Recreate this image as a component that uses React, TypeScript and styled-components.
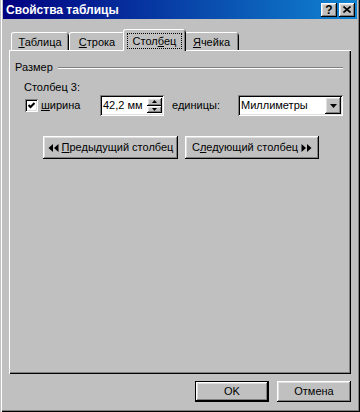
import React from "react";
import styled, { createGlobalStyle, css } from "styled-components";

const GlobalStyle = createGlobalStyle`
  html, body { margin: 0; padding: 0; background: #c0c0c0; }
  body { font-family: "Liberation Sans", Arial, sans-serif; font-size: 11px; color: #000; }
  * { box-sizing: border-box; }
`;

const raised = css`
  box-shadow: inset -1px -1px 0 #000, inset 1px 1px 0 #fff, inset -2px -2px 0 #808080, inset 2px 2px 0 #dfdfdf;
`;
const sunken = css`
  box-shadow: inset 1px 1px 0 #808080, inset -1px -1px 0 #fff, inset 2px 2px 0 #000, inset -2px -2px 0 #dfdfdf;
`;

const Window = styled.div`
  width: 360px;
  height: 412px;
  background: #c0c0c0;
  padding: 0 3px 3px 3px;
  display: flex;
  flex-direction: column;
  overflow: hidden;
  box-shadow: inset 1px 0 0 #c0c0c0, inset 2px 0 0 #fff, inset -1px -1px 0 #000, inset -2px -2px 0 #808080;
`;

const TitleBar = styled.div`
  height: 19px;
  flex: none;
  display: flex;
  align-items: center;
  padding: 0 2px 0 3px;
  background: linear-gradient(to right, #000080, #1084d0);
`;

const TitleText = styled.div`
  color: #fff;
  font-weight: bold;
  font-size: 12px;
  line-height: 14px;
  flex: 1;
  white-space: nowrap;
`;

const CaptionButtons = styled.div`
  display: flex;
  gap: 2px;
  margin-top: 1px;
`;

const CaptionButton = styled.div`
  width: 16px;
  height: 14px;
  background: #c0c0c0;
  ${raised};
  display: flex;
  align-items: center;
  justify-content: center;
  font-weight: bold;
  font-size: 12px;
  line-height: 12px;
  padding-bottom: 1px;
`;

const TabStrip = styled.div`
  margin-top: 10px;
  height: 21px;
  flex: none;
  display: flex;
  align-items: flex-end;
  padding-left: 8px;
  position: relative;
  z-index: 1;
`;

const Tab = styled.div<{ $w: number; $active?: boolean }>`
  width: ${(p) => (p.$active ? p.$w + 4 : p.$w)}px;
  height: ${(p) => (p.$active ? 22 : 18)}px;
  margin: ${(p) => (p.$active ? "0 -2px -1px -2px" : "0")};
  padding: ${(p) => (p.$active ? "4px 4px 2px 4px" : "2px 0 0 0")};
  background: #c0c0c0;
  border-radius: 3px 3px 0 0;
  box-shadow: inset 1px 0 0 #fff, inset 0 1px 0 #fff, inset -1px 0 0 #000, inset -2px 0 0 #808080;
  display: flex;
  position: relative;
  z-index: ${(p) => (p.$active ? 2 : 1)};
`;

const TabLabel = styled.div<{ $focus?: boolean }>`
  flex: 1;
  display: flex;
  align-items: center;
  justify-content: center;
  line-height: 13px;
  white-space: nowrap;
  border: 1px dotted ${(p) => (p.$focus ? "#000" : "transparent")};
`;

const Key = styled.span`
  text-decoration: underline;
`;

const Panel = styled.div`
  margin: 0 6px;
  height: 324px;
  flex: none;
  background: #c0c0c0;
  border-top: 1px solid #fff;
  border-left: 1px solid #fff;
  box-shadow: inset -1px -1px 0 #000, inset -2px -2px 0 #808080;
  padding: 10px 8px 0 5px;
  display: flex;
  flex-direction: column;
  position: relative;
  z-index: 0;
`;

const GroupHeader = styled.div`
  height: 13px;
  display: flex;
  align-items: center;
  line-height: 13px;
`;

const GroupLine = styled.div`
  flex: 1;
  height: 2px;
  margin-left: 5px;
  margin-top: 1px;
  border-top: 1px solid #808080;
  border-bottom: 1px solid #fff;
`;

const ColumnLabel = styled.div`
  margin-top: 7px;
  padding-left: 9px;
  line-height: 13px;
  height: 13px;
`;

const FieldRow = styled.div`
  margin-top: 1px;
  height: 21px;
  display: flex;
  align-items: center;
  padding-left: 10px;
`;

const CheckBox = styled.div`
  width: 13px;
  height: 13px;
  background: #fff;
  ${sunken};
  display: flex;
  align-items: center;
  justify-content: center;
  flex: none;
`;

const FieldLabel = styled.div<{ $w: number; $ml: number }>`
  width: ${(p) => p.$w}px;
  margin-left: ${(p) => p.$ml}px;
  line-height: 13px;
  white-space: nowrap;
  flex: none;
`;

const Field = styled.div<{ $w: number }>`
  width: ${(p) => p.$w}px;
  height: 21px;
  background: #fff;
  ${sunken};
  padding: 2px;
  display: flex;
  align-items: stretch;
  flex: none;
`;

const FieldText = styled.div<{ $pl: number }>`
  flex: 1;
  min-width: 0;
  display: flex;
  align-items: center;
  padding-left: ${(p) => p.$pl}px;
  line-height: 13px;
  white-space: nowrap;
  overflow: hidden;
`;

const SpinColumn = styled.div`
  width: 15px;
  flex: none;
  display: flex;
  flex-direction: column;
  padding: 1px 0;
`;

const SpinButton = styled.div`
  flex: 1;
  background: #c0c0c0;
  ${raised};
  display: flex;
  align-items: center;
  justify-content: center;
`;

const DropButton = styled.div`
  width: 16px;
  flex: none;
  background: #c0c0c0;
  ${raised};
  display: flex;
  align-items: center;
  justify-content: center;
`;

const NavRow = styled.div`
  margin-top: 20px;
  display: flex;
  gap: 7px;
  padding-left: 28px;
`;

const Button = styled.div<{ $w: number; $h: number; $default?: boolean }>`
  width: ${(p) => p.$w}px;
  height: ${(p) => p.$h}px;
  background: #c0c0c0;
  display: flex;
  align-items: center;
  justify-content: center;
  gap: 3px;
  line-height: 13px;
  white-space: nowrap;
  ${(p) =>
    p.$default
      ? css`
          box-shadow: inset 0 0 0 1px #000, inset -2px -2px 0 #000, inset 2px 2px 0 #fff,
            inset -3px -3px 0 #808080, inset 3px 3px 0 #dfdfdf;
        `
      : raised};
`;

const Footer = styled.div`
  margin-top: 7px;
  display: flex;
  justify-content: flex-end;
  gap: 8px;
  padding-right: 6px;
`;

const LeftArrows = () => (
  <svg width="11" height="8" viewBox="0 0 11 8">
    <polygon points="5,0 0.5,4 5,8" fill="#000" />
    <polygon points="10.5,0 6,4 10.5,8" fill="#000" />
  </svg>
);

const RightArrows = () => (
  <svg width="11" height="8" viewBox="0 0 11 8">
    <polygon points="0.5,0 5,4 0.5,8" fill="#000" />
    <polygon points="6,0 10.5,4 6,8" fill="#000" />
  </svg>
);

const CheckMark = () => (
  <svg width="7" height="7" viewBox="0 0 7 7">
    <path d="M0.5 3 L2.5 5 L6.5 1" stroke="#000" strokeWidth="2" fill="none" />
  </svg>
);

const CloseGlyph = () => (
  <svg width="8" height="7" viewBox="0 0 8 7">
    <path d="M0.5 0.5 L7.5 6.5 M7.5 0.5 L0.5 6.5" stroke="#000" strokeWidth="1.6" fill="none" />
  </svg>
);

const Triangle = ({ dir, w, h }: { dir: "up" | "down"; w: number; h: number }) => (
  <svg width={w} height={h} viewBox={`0 0 ${w} ${h}`}>
    <polygon
      points={dir === "up" ? `${w / 2},0 ${w},${h} 0,${h}` : `0,0 ${w},0 ${w / 2},${h}`}
      fill="#000"
    />
  </svg>
);

export default function App() {
  return (
    <>
      <GlobalStyle />
      <Window>
        <TitleBar>
          <TitleText>Свойства таблицы</TitleText>
          <CaptionButtons>
            <CaptionButton>?</CaptionButton>
            <CaptionButton>
              <CloseGlyph />
            </CaptionButton>
          </CaptionButtons>
        </TitleBar>
        <TabStrip>
          <Tab $w={58}>
            <TabLabel>
              <span>
                <Key>Т</Key>аблица
              </span>
            </TabLabel>
          </Tab>
          <Tab $w={56}>
            <TabLabel>
              <span>
                <Key>С</Key>трока
              </span>
            </TabLabel>
          </Tab>
          <Tab $w={59} $active>
            <TabLabel $focus>
              <span>
                Стол<Key>б</Key>ец
              </span>
            </TabLabel>
          </Tab>
          <Tab $w={55}>
            <TabLabel>
              <span>
                <Key>Я</Key>чейка
              </span>
            </TabLabel>
          </Tab>
        </TabStrip>
        <Panel>
          <GroupHeader>
            Размер
            <GroupLine />
          </GroupHeader>
          <ColumnLabel>Столбец 3:</ColumnLabel>
          <FieldRow>
            <CheckBox>
              <CheckMark />
            </CheckBox>
            <FieldLabel $w={59} $ml={3}>
              <Key>ш</Key>ирина
            </FieldLabel>
            <Field $w={64}>
              <FieldText $pl={1}>42,2 мм</FieldText>
              <SpinColumn>
                <SpinButton>
                  <Triangle dir="up" w={5} h={3} />
                </SpinButton>
                <SpinButton>
                  <Triangle dir="down" w={5} h={3} />
                </SpinButton>
              </SpinColumn>
            </Field>
            <FieldLabel $w={66} $ml={8}>
              е<Key>д</Key>иницы:
            </FieldLabel>
            <Field $w={105}>
              <FieldText $pl={1}>Миллиметры</FieldText>
              <DropButton>
                <Triangle dir="down" w={7} h={4} />
              </DropButton>
            </Field>
          </FieldRow>
          <NavRow>
            <Button $w={135} $h={23}>
              <LeftArrows />
              <span>
                <Key>П</Key>редыдущий столбец
              </span>
            </Button>
            <Button $w={134} $h={23}>
              <span>
                С<Key>л</Key>едующий столбец
              </span>
              <RightArrows />
            </Button>
          </NavRow>
        </Panel>
        <Footer>
          <Button $w={74} $h={21} $default>
            OK
          </Button>
          <Button $w={74} $h={21}>
            Отмена
          </Button>
        </Footer>
      </Window>
    </>
  );
}
